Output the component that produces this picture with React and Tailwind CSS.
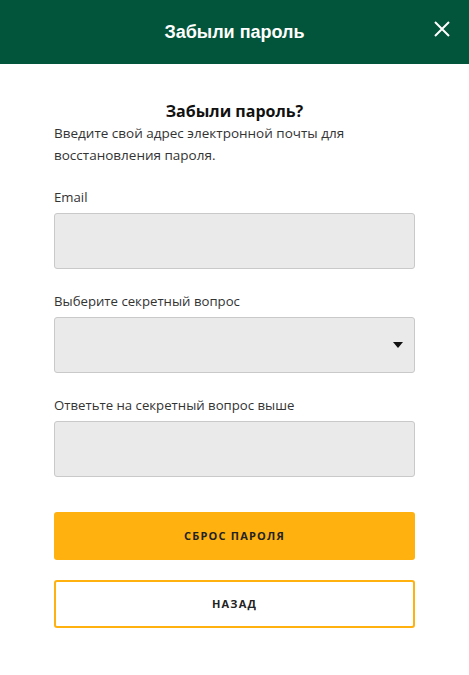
import { useState } from "react";

const Field = ({ label, children }) => (
  <div className="flex flex-col">
    <label className="text-[13.2px] text-[#333] leading-[20px] mb-[6px]">{label}</label>
    {children}
  </div>
);

const inputCls =
  "w-full h-[56px] bg-[#eaeaea] border border-[#c9c9c9] rounded-[3px] px-3 outline-none text-[14px]";

export default function App() {
  const [email, setEmail] = useState("");
  const [answer, setAnswer] = useState("");

  return (
    <div className="w-[469px] h-[675px] bg-white font-['Open_Sans',sans-serif]">
      <div className="h-[64px] bg-[#02553a] flex items-center justify-center relative">
        <h1 className="text-white text-[18px] font-bold font-['Liberation_Sans',Arial,sans-serif]">
          Забыли пароль
        </h1>
        <button className="absolute right-[18px] top-[20px] text-white">
          <svg width="18" height="18" viewBox="0 0 18 18" fill="none" stroke="currentColor" strokeWidth="2">
            <path d="M2 2l14 14M16 2L2 16" />
          </svg>
        </button>
      </div>

      <div className="px-[54px] pt-[36px]">
        <h2 className="text-center text-[16px] font-bold text-[#111] leading-[22px]">Забыли пароль?</h2>
        <p className="text-[13.5px] text-[#333] leading-[22px]">
          Введите свой адрес электронной почты для восстановления пароля.
        </p>

        <div className="flex flex-col gap-[22px] mt-[21px]">
          <Field label="Email">
            <input className={inputCls} value={email} onChange={(e) => setEmail(e.target.value)} />
          </Field>
          <Field label="Выберите секретный вопрос">
            <div className="relative">
              <div className={inputCls}></div>
              <svg className="absolute right-[12px] top-[25px]" width="10" height="6" viewBox="0 0 10 6">
                <path d="M0 0h10L5 6z" fill="#111" />
              </svg>
            </div>
          </Field>
          <Field label="Ответьте на секретный вопрос выше">
            <input className={inputCls} value={answer} onChange={(e) => setAnswer(e.target.value)} />
          </Field>
        </div>

        <div className="flex flex-col gap-[20px] mt-[35px]">
          <button className="h-[48px] w-full bg-[#ffb10f] rounded-[3px] text-[11px] font-bold tracking-[1.2px] text-[#222]">
            СБРОС ПАРОЛЯ
          </button>
          <button className="h-[48px] w-full bg-white border-2 border-[#ffb10f] rounded-[3px] text-[11px] font-bold tracking-[1.2px] text-[#222]">
            НАЗАД
          </button>
        </div>
      </div>
    </div>
  );
}
